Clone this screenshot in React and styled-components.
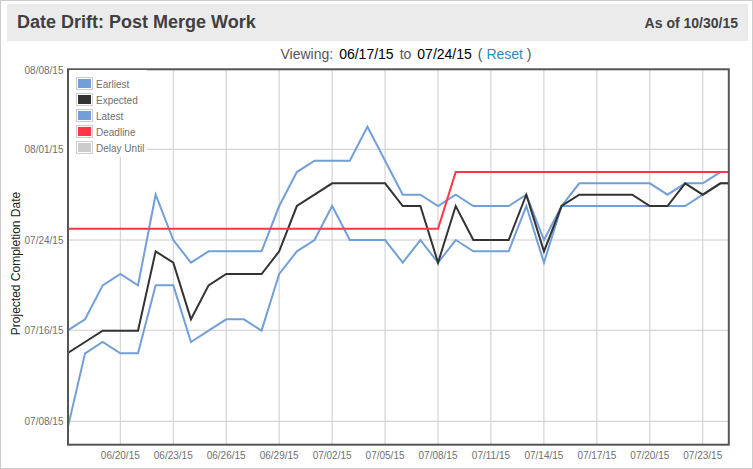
import React from 'react';
import styled, { createGlobalStyle } from 'styled-components';

const GlobalStyle = createGlobalStyle`
  html, body {
    margin: 0;
    padding: 0;
    background: #fff;
  }
  body {
    font-family: "Liberation Sans", Arial, sans-serif;
  }
`;

const Panel = styled.div`
  box-sizing: border-box;
  width: 753px;
  height: 469px;
  border: 1px solid #ccc;
  background: #fff;
  padding-top: 3px;
  overflow: hidden;
`;

const Header = styled.header`
  box-sizing: border-box;
  height: 37px;
  margin: 0 4px 0 6px;
  padding: 0 10px;
  background: #ebebeb;
  color: #3f3f3f;
  display: flex;
  align-items: center;
  justify-content: space-between;
`;

const Title = styled.h1`
  margin: 0;
  font-size: 18px;
  font-weight: bold;
`;

const AsOf = styled.div`
  font-size: 14px;
  font-weight: bold;
`;

const RangeBar = styled.div`
  height: 20px;
  margin-top: 3px;
  padding-left: 59px;
  display: flex;
  align-items: center;
  justify-content: center;
  gap: 6px;
  font-size: 14px;
  color: #555;
`;

const RangeDate = styled.span`
  color: #000;
`;

const ResetLink = styled.a`
  color: #2a8cc4;
  cursor: pointer;
`;

const ChartArea = styled.div`
  position: relative;
  width: 751px;
  height: 404px;
`;

const ChartSvg = styled.svg`
  display: block;
`;

const AxisLabel = styled.text`
  font-size: 10px;
  fill: #6f6f6f;
`;

const AxisTitle = styled.text`
  font-size: 12px;
  fill: #222;
`;

const Legend = styled.ul`
  position: absolute;
  left: 68px;
  top: 6px;
  box-sizing: border-box;
  width: 78px;
  height: 87px;
  margin: 0;
  padding: 7px 0 0 7px;
  list-style: none;
  background: #fff;
  display: flex;
  flex-direction: column;
  gap: 3px;
`;

const LegendItem = styled.li`
  display: flex;
  align-items: center;
  gap: 3px;
  height: 13px;
  font-size: 10px;
  color: #6f6f6f;
  white-space: nowrap;
`;

const LegendLabel = styled.span`
  padding-top: 1px;
`;

const Swatch = styled.span`
  box-sizing: border-box;
  width: 17px;
  height: 13px;
  flex: none;
  border: 1px solid #ccc;
  outline: 1px solid #fff;
  outline-offset: -2px;
  background: ${(p) => p.color};
`;

const BLUE = '#739fd8';
const BLACK = '#333';
const RED = '#ff3545';

const xAt = (i) => 67.4 + 17.65 * i;
const yAt = (d) => 421.3 - d * 11.33;

const earliest = [
  -0.7, 6, 7, 6, 6, 12, 12, 7, 8, 9, 9, 8, 13, 15, 16, 19, 16, 16, 16, 14, 16,
  14, 16, 15, 15, 15, 19, 14, 19, 19, 19, 19, 19, 19, 19, 19, 20, 21, 21,
];
const latest = [
  8, 9, 12, 13, 12, 20, 16, 14, 15, 15, 15, 15, 19, 22, 23, 23, 23, 26, 23, 20,
  20, 19, 20, 19, 19, 19, 20, 16, 19, 21, 21, 21, 21, 21, 20, 21, 21, 22, 22,
];
const expected = [
  6, 7, 8, 8, 8, 15, 14, 9, 12, 13, 13, 13, 15, 19, 20, 21, 21, 21, 21, 19, 19,
  14, 19, 16, 16, 16, 20, 15, 19, 20, 20, 20, 20, 19, 19, 21, 20, 21, 21,
];
const deadline = earliest.map((_, i) => (i < 22 ? 17 : 22));

const series = [
  { name: 'earliest', color: BLUE, data: earliest },
  { name: 'latest', color: BLUE, data: latest },
  { name: 'expected', color: BLACK, data: expected },
  { name: 'deadline', color: RED, data: deadline },
];

const yTicks = [
  { label: '08/08/15', y: 70, grid: false },
  { label: '08/01/15', y: 149.3, grid: true },
  { label: '07/24/15', y: 240, grid: true },
  { label: '07/16/15', y: 330.3, grid: true },
  { label: '07/08/15', y: 421.3, grid: true },
];

const xTicks = [
  '06/20/15', '06/23/15', '06/26/15', '06/29/15', '07/02/15', '07/05/15',
  '07/08/15', '07/11/15', '07/14/15', '07/17/15', '07/20/15', '07/23/15',
];

const legendItems = [
  { label: 'Earliest', color: BLUE },
  { label: 'Expected', color: BLACK },
  { label: 'Latest', color: BLUE },
  { label: 'Deadline', color: RED },
  { label: 'Delay Until', color: '#ccc' },
];

const Chart = () => (
  <ChartSvg width="751" height="404" viewBox="1 64 751 404">
    <defs>
      <clipPath id="plot">
        <rect x="68" y="69" width="661" height="376" />
      </clipPath>
    </defs>

    {yTicks.filter((t) => t.grid).map((t) => (
      <line key={t.label} x1="68" x2="729" y1={t.y} y2={t.y} stroke="#ccc" />
    ))}
    {xTicks.map((t, i) => (
      <line key={t} x1={120.3 + 52.95 * i} x2={120.3 + 52.95 * i} y1="69" y2="445" stroke="#ccc" />
    ))}

    <g clipPath="url(#plot)">
      {series.map((s) => (
        <polyline
          key={s.name}
          fill="none"
          stroke={s.color}
          strokeWidth="2"
          points={s.data.map((d, i) => `${xAt(i)},${yAt(d)}`).join(' ')}
        />
      ))}
    </g>

    <rect x="68" y="69.3" width="660.8" height="375.4" fill="none" stroke="#555" strokeWidth="2" />

    {yTicks.map((t) => (
      <AxisLabel key={t.label} x="63.5" y={t.y + 3.7} textAnchor="end">{t.label}</AxisLabel>
    ))}
    {xTicks.map((t, i) => (
      <AxisLabel key={t} x={120.3 + 52.95 * i} y="458.5" textAnchor="middle">{t}</AxisLabel>
    ))}

    <AxisTitle transform="translate(20 263.5) rotate(-90)" textAnchor="middle">
      Projected Completion Date
    </AxisTitle>
  </ChartSvg>
);

const App = () => (
  <>
    <GlobalStyle />
    <Panel>
      <Header>
        <Title>Date Drift: Post Merge Work</Title>
        <AsOf>As of 10/30/15</AsOf>
      </Header>
      <RangeBar>
        <span>Viewing:</span>
        <RangeDate>06/17/15</RangeDate>
        <span>to</span>
        <RangeDate>07/24/15</RangeDate>
        <span>( <ResetLink>Reset</ResetLink> )</span>
      </RangeBar>
      <ChartArea>
        <Chart />
        <Legend>
          {legendItems.map((item) => (
            <LegendItem key={item.label}>
              <Swatch color={item.color} />
              <LegendLabel>{item.label}</LegendLabel>
            </LegendItem>
          ))}
        </Legend>
      </ChartArea>
    </Panel>
  </>
);

export default App;
